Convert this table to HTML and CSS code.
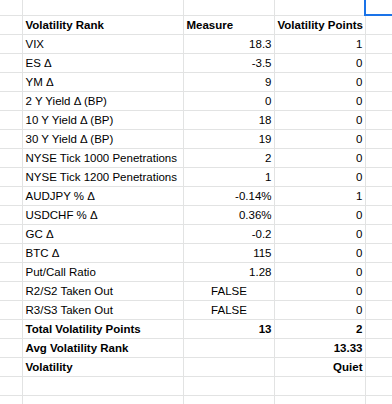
FILE: index.html
```html
<!DOCTYPE html>
<html>
<head>
<meta charset="utf-8">
<link rel="stylesheet" href="styles.css">
</head>
<body>
<div class="sheet">
<table class="grid">
<colgroup><col class="ca"><col class="cb"><col class="cc"><col class="cd"><col class="ce"></colgroup>
<tr class="top"><td></td><td></td><td></td><td></td><td></td></tr>
<tr><td></td><td class="b">Volatility Rank</td><td class="b">Measure</td><td class="b">Volatility Points</td><td></td></tr>
<tr><td></td><td>VIX</td><td class="r">18.3</td><td class="r">1</td><td></td></tr>
<tr><td></td><td>ES Δ</td><td class="r">-3.5</td><td class="r">0</td><td></td></tr>
<tr><td></td><td>YM Δ</td><td class="r">9</td><td class="r">0</td><td></td></tr>
<tr><td></td><td>2 Y Yield Δ (BP)</td><td class="r">0</td><td class="r">0</td><td></td></tr>
<tr><td></td><td>10 Y Yield Δ (BP)</td><td class="r">18</td><td class="r">0</td><td></td></tr>
<tr><td></td><td>30 Y Yield Δ (BP)</td><td class="r">19</td><td class="r">0</td><td></td></tr>
<tr><td></td><td>NYSE Tick 1000 Penetrations</td><td class="r">2</td><td class="r">0</td><td></td></tr>
<tr><td></td><td>NYSE Tick 1200 Penetrations</td><td class="r">1</td><td class="r">0</td><td></td></tr>
<tr><td></td><td>AUDJPY % Δ</td><td class="r">-0.14%</td><td class="r">1</td><td></td></tr>
<tr><td></td><td>USDCHF % Δ</td><td class="r">0.36%</td><td class="r">0</td><td></td></tr>
<tr><td></td><td>GC Δ</td><td class="r">-0.2</td><td class="r">0</td><td></td></tr>
<tr><td></td><td>BTC Δ</td><td class="r">115</td><td class="r">0</td><td></td></tr>
<tr><td></td><td>Put/Call Ratio</td><td class="r">1.28</td><td class="r">0</td><td></td></tr>
<tr><td></td><td>R2/S2 Taken Out</td><td class="c">FALSE</td><td class="r">0</td><td></td></tr>
<tr><td></td><td>R3/S3 Taken Out</td><td class="c">FALSE</td><td class="r">0</td><td></td></tr>
<tr><td></td><td class="b">Total Volatility Points</td><td class="r b">13</td><td class="r b">2</td><td></td></tr>
<tr><td></td><td class="b">Avg Volatility Rank</td><td></td><td class="r b">13.33</td><td></td></tr>
<tr><td></td><td class="b">Volatility</td><td></td><td class="r b">Quiet</td><td></td></tr>
<tr><td></td><td></td><td></td><td></td><td></td></tr>
<tr><td></td><td></td><td></td><td></td><td></td></tr>
</table>
<div class="selection"></div>
</div>
</body>
</html>
```
FILE: styles.css
```css
html, body {
  margin: 0;
  padding: 0;
  background: #fff;
  overflow: hidden;
}
.sheet {
  position: relative;
  width: 392px;
  height: 404px;
  overflow: hidden;
  font-family: Arial, "Liberation Sans", sans-serif;
  font-size: 11.5px;
  color: #000;
}
.grid {
  border-collapse: collapse;
  table-layout: fixed;
  width: 430px;
}
.ca { width: 22px; }
.cb { width: 161px; }
.cc { width: 91px; }
.cd { width: 91px; }
.ce { width: 65px; }
.grid td {
  height: 18px;
  padding: 0 2px 0 3px;
  border-right: 1px solid #e2e3e3;
  border-bottom: 1px solid #e2e3e3;
  line-height: 18px;
  white-space: nowrap;
  overflow: hidden;
  vertical-align: bottom;
  box-sizing: content-box;
}
.grid tr.top td {
  height: 15px;
  line-height: 15px;
}
.grid td.r { text-align: right; padding-right: 2px; }
.grid td.c { text-align: center; }
.grid td.b { font-weight: bold; }
.grid td:first-child { padding: 0; }
.selection {
  position: absolute;
  left: 364px;
  top: -4px;
  width: 60px;
  height: 16px;
  border: 2px solid #1a73e8;
}
```
